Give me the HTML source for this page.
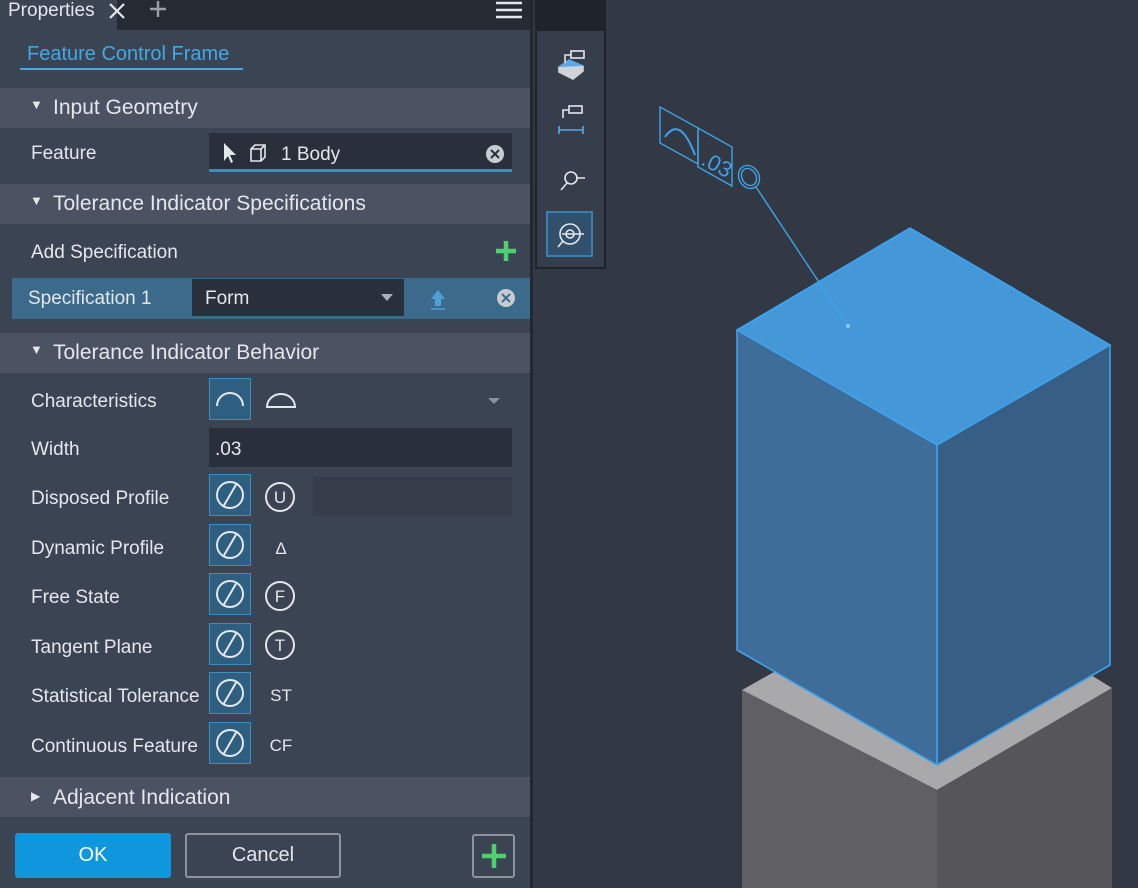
<!DOCTYPE html>
<html><head><meta charset="utf-8"><style>
*{margin:0;padding:0;box-sizing:border-box}
body{width:1138px;height:888px;overflow:hidden;background:#323844;font-family:"Liberation Sans",sans-serif;color:#e4e7ec;position:relative;font-size:19px}
.a{position:absolute}
.panel{left:0;top:0;width:532px;height:888px;background:#3b4453}
.tabbar{left:0;top:0;width:532px;height:30px;background:#252a33}
.sec{left:0;width:530px;height:40px;background:#4b5363;font-size:21px}
.lbl{left:31px;font-size:19px;color:#e4e7ec}
</style></head><body>
<div class="a panel"></div>
<div class="a tabbar"></div>
<div class="a" style="left:0;top:0;width:117px;height:30px;background:#3b4453"></div>
<div class="a" style="left:8px;top:0px;font-size:19px">Properties</div>
<svg class="a" style="left:107px;top:1px" width="20" height="20"><path d="M3 3L17 17M17 3L3 17" stroke="#e4e7ec" stroke-width="2.2"/></svg>
<svg class="a" style="left:148px;top:0px" width="20" height="20"><path d="M10 1V17M2 9H18" stroke="#9aa0aa" stroke-width="2.4"/></svg>
<svg class="a" style="left:496px;top:0px" width="26" height="20"><path d="M0 3H26M0 10H26M0 17H26" stroke="#e4e7ec" stroke-width="2.6"/></svg>
<div class="a" style="left:27px;top:43px;color:#41a9e6;font-size:20px">Feature Control Frame</div>
<div class="a" style="left:20px;top:68px;width:223px;height:2px;background:#41a9e6"></div>

<div class="a sec" style="top:88px"><span class="a" style="left:30px;top:9px;font-size:13px">▼</span><span class="a" style="left:53px;top:8px">Input Geometry</span></div>
<div class="a lbl" style="top:143px">Feature</div>
<div class="a" style="left:209px;top:133px;width:303px;height:39px;background:#2a303b;border-bottom:3px solid #2f8fd0"></div>
<svg class="a" style="left:220px;top:141px" width="60" height="24"><path d="M4 2V20L8 15L11 22L13 21L10 14H16Z" fill="#e4e7ec"/><path d="M31 8L35 4H45V16L41 20H31Z M31 8H41V20 M41 8L45 4" fill="none" stroke="#e4e7ec" stroke-width="1.6"/></svg>
<div class="a" style="left:281px;top:144px;font-size:19px">1 Body</div>
<svg class="a" style="left:485px;top:144px" width="20" height="20"><circle cx="10" cy="10" r="9" fill="#c8ccd2"/><path d="M6 6L14 14M14 6L6 14" stroke="#2a303b" stroke-width="2"/></svg>

<div class="a sec" style="top:184px"><span class="a" style="left:30px;top:9px;font-size:13px">▼</span><span class="a" style="left:53px;top:8px">Tolerance Indicator Specifications</span></div>
<div class="a lbl" style="top:242px">Add Specification</div>
<svg class="a" style="left:496px;top:240px" width="20" height="22"><path d="M10 1V21M0 11H20" stroke="#4ed06e" stroke-width="4.5"/></svg>
<div class="a" style="left:12px;top:278px;width:518px;height:41px;background:#3b6a8a"></div>
<div class="a" style="left:28px;top:288px;font-size:19px">Specification 1</div>
<div class="a" style="left:192px;top:279px;width:212px;height:37px;background:#29303b"></div>
<div class="a" style="left:205px;top:288px;font-size:19px">Form</div>
<div class="a" style="left:381px;top:294px;border:6px solid transparent;border-top:7px solid #aab0b8"></div>
<svg class="a" style="left:428px;top:288px" width="20" height="22"><path d="M10 2L17 11H13V18H7V11H3Z" fill="#4ea0d8"/><path d="M3 21H17" stroke="#4ea0d8" stroke-width="1.5"/></svg>
<svg class="a" style="left:496px;top:288px" width="20" height="20"><circle cx="10" cy="10" r="9" fill="#c8ccd2"/><path d="M6 6L14 14M14 6L6 14" stroke="#3b6a8a" stroke-width="2"/></svg>

<div class="a sec" style="top:333px"><span class="a" style="left:30px;top:9px;font-size:13px">▼</span><span class="a" style="left:53px;top:8px">Tolerance Indicator Behavior</span></div>

<div class="a lbl" style="top:391px">Characteristics</div>
<svg class="a" style="left:209px;top:378px" width="90" height="42"><rect x="0.5" y="0.5" width="41" height="41" fill="#2e5f80" stroke="#3c8dc0"/><path d="M8 28A13 13 0 0 1 34 28" fill="none" stroke="#e4e7ec" stroke-width="2"/><path d="M58 29A14 13 0 0 1 86 29Z" fill="none" stroke="#e4e7ec" stroke-width="2"/></svg>
<div class="a" style="left:488px;top:398px;border:6px solid transparent;border-top:6px solid #8a909a"></div>

<div class="a lbl" style="top:439px">Width</div>
<div class="a" style="left:209px;top:428px;width:303px;height:39px;background:#29303b"></div>
<div class="a" style="left:215px;top:439px;font-size:19px">.03</div>

<div class="a lbl" style="top:488px">Disposed Profile</div>
<div class="a lbl" style="top:538px">Dynamic Profile</div>
<div class="a lbl" style="top:587px">Free State</div>
<div class="a lbl" style="top:637px">Tangent Plane</div>
<div class="a lbl" style="top:686px">Statistical Tolerance</div>
<div class="a lbl" style="top:736px">Continuous Feature</div>
<div class="a" style="left:313px;top:477px;width:199px;height:39px;background:#353d4a"></div>

<svg class="a" style="left:0;top:0" width="532" height="888">
<g fill="none" stroke="#e4e7ec" stroke-width="2">
<g id="d">
<rect x="209.5" y="474.5" width="41" height="41" fill="#2e5f80" stroke="#3c8dc0" stroke-width="1"/>
<circle cx="230" cy="495" r="13"/><path d="M223 507L237 483"/>
</g>
<use href="#d" y="50"/><use href="#d" y="99"/><use href="#d" y="149"/><use href="#d" y="198"/><use href="#d" y="248"/>
<circle cx="280" cy="497" r="14"/><circle cx="280" cy="596" r="14"/><circle cx="280" cy="645" r="14"/>
</g>
<g fill="#e4e7ec" font-family="Liberation Sans" text-anchor="middle" font-size="17">
<text x="280" y="503">U</text><text x="280" y="602">F</text><text x="280" y="651">T</text>
<text x="281" y="554">Δ</text><text x="281" y="701">ST</text><text x="281" y="751">CF</text>
</g>
</svg>

<div class="a sec" style="top:777px"><span class="a" style="left:31px;top:12px;font-size:12px">▶</span><span class="a" style="left:53px;top:9px">Adjacent Indication</span></div>

<div class="a" style="left:15px;top:833px;width:156px;height:45px;background:#0f97dd;border-radius:3px;text-align:center;line-height:45px;font-size:20px;color:#fff">OK</div>
<div class="a" style="left:185px;top:833px;width:156px;height:45px;border:2px solid #8c939d;border-radius:3px;text-align:center;line-height:41px;font-size:20px">Cancel</div>
<div class="a" style="left:472px;top:834px;width:43px;height:44px;border:2px solid #8c939d;border-radius:3px"></div>
<svg class="a" style="left:480px;top:842px" width="28" height="28"><path d="M14 2V26M2 14H26" stroke="#4ed06e" stroke-width="4.5"/></svg>

<div class="a" style="left:530px;top:0;width:3px;height:888px;background:#222730"></div>

<div class="a" style="left:535px;top:0;width:71px;height:269px;background:#1f242c"></div>
<div class="a" style="left:537px;top:31px;width:67px;height:236px;background:#363e4b"></div>
<div class="a" style="left:546px;top:211px;width:47px;height:46px;border:2px solid #3a7fb0;background:#30506c"></div>
<svg class="a" style="left:535px;top:0" width="71" height="269">
<g fill="none" stroke="#e4e7ec" stroke-width="1.6">
<path d="M24 67L34 60L48 66L38 74Z" fill="#5aa9e6" stroke="#5aa9e6"/>
<path d="M24 67V72L38 79L48 71V66" fill="#d0d4da" stroke="#d0d4da"/>
<path d="M30 63V55H36"/><rect x="36" y="51" width="13" height="7"/>
<path d="M28 118V110H34"/><rect x="34" y="106" width="13" height="7"/>
<path d="M24 126V134M48 126V134M24 130H48" stroke="#5aa9e6"/>
<circle cx="36" cy="178" r="6"/><path d="M42 178H50M32 183L26 190"/>
<circle cx="35" cy="234" r="10"/><circle cx="35" cy="234" r="4"/><path d="M27 234H49M28 241L23 247"/>
</g></svg>

<svg class="a" style="left:533px;top:0" width="605" height="888" viewBox="533 0 605 888">
<polygon points="742,690 937,580 1112,688 937,790" fill="#a9a9ab"/>
<polygon points="742,690 937,790 937,888 742,888" fill="#606064"/>
<polygon points="937,790 1112,688 1112,888 937,888" fill="#55555a"/>
<polygon points="737,330 937,445 937,765 737,650" fill="#3f6d99"/>
<polygon points="937,445 1110,345 1110,665 937,765" fill="#375f86"/>
<polygon points="737,330 910,228 1110,345 937,445" fill="#4598d8"/>
<g fill="none" stroke="#3da3f0" stroke-width="1.6">
<polygon points="737,330 910,228 1110,345 937,445"/>
<path d="M737,330V650L937,765L1110,665V345M937,445V765"/>
</g>
<g fill="none" stroke="#3fa2e6" stroke-width="1.4">
<path d="M756 187L848 326"/>
<polygon points="660,107 698,128 698,164 660,143"/>
<polygon points="698,128 732,147 732,186 698,167"/>
<path d="M665 137Q680 115 695 155" stroke-width="2"/>
<ellipse cx="749" cy="177" rx="10" ry="12" transform="rotate(-30 749 177)"/>
<ellipse cx="749" cy="177" rx="7" ry="9" transform="rotate(-30 749 177)"/>
</g>
<text x="700" y="164" fill="#3fa2e6" font-size="22" font-family="Liberation Sans" transform="rotate(28 700 164)">.03</text>
<circle cx="848" cy="326" r="2" fill="#8fcaf5"/>
</svg>
</body></html>
